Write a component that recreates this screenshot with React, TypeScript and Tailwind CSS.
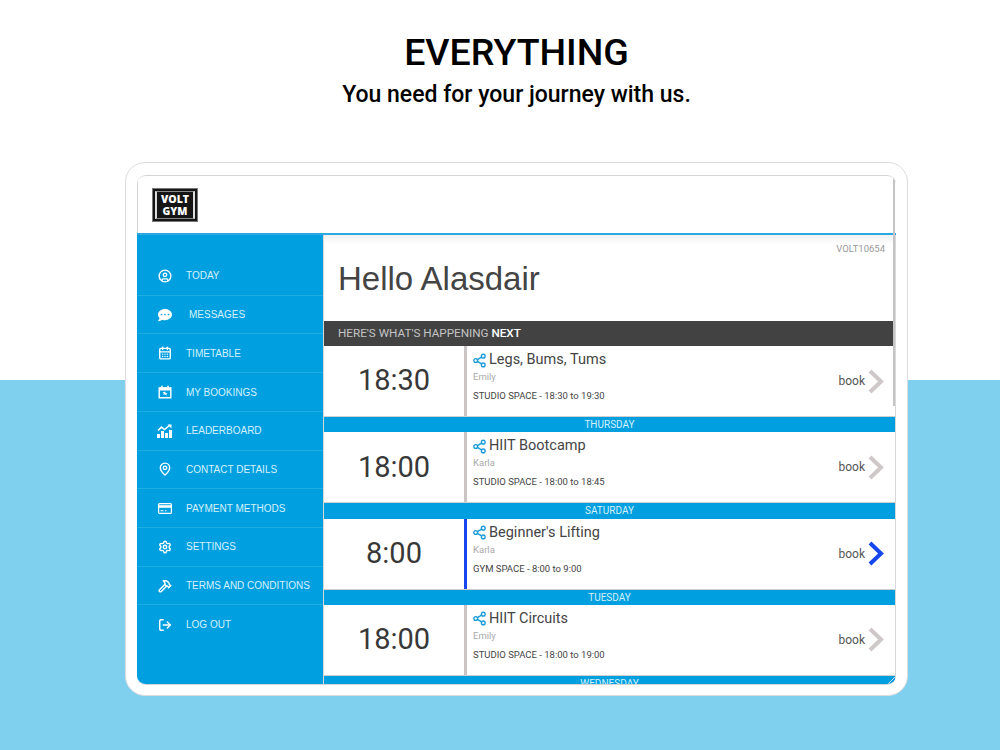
import { CircleUser, CalendarDays, MapPin, Settings, Hammer, LogOut, Share2 } from 'lucide-react'
import { FaCommentDots } from 'react-icons/fa'

const roboto = "font-['Roboto',sans-serif]"

function BookingsIcon() {
  return (
    <svg viewBox="0 0 14 14" className="h-[14px] w-[14px]" fill="none">
      <path d="M1.2 3h11.6v9.8H1.2z" stroke="currentColor" strokeWidth="1.4" />
      <path d="M1 2.5h12V5.5H1z" fill="currentColor" />
      <path d="M4 .8v2M10 .8v2" stroke="currentColor" strokeWidth="1.6" />
      <path d="M7 6.4l.8 1.6 1.7.2-1.2 1.2.3 1.7L7 9.3l-1.6.8.3-1.7-1.2-1.2 1.7-.2z" fill="currentColor" />
    </svg>
  )
}

function LeaderboardIcon() {
  return (
    <svg viewBox="0 0 16 14" className="h-[14px] w-[16px]" fill="currentColor">
      <path d="M1 6.5l3.5-3.4 3 2.4L13 1" fill="none" stroke="currentColor" strokeWidth="1.5" />
      <path d="M10.5.5h4v4z" />
      <rect x="0" y="10" width="3" height="4" />
      <rect x="4" y="7" width="3" height="7" />
      <rect x="8" y="9" width="3" height="5" />
      <rect x="12" y="6" width="3" height="8" />
    </svg>
  )
}

function PaymentIcon() {
  return (
    <svg viewBox="0 0 14 11" className="h-[11px] w-[14px]" fill="none">
      <rect x=".6" y=".6" width="12.8" height="9.8" rx="1" stroke="currentColor" strokeWidth="1.2" />
      <path d="M1 2.2h12v2.6H1z" fill="currentColor" />
      <path d="M2.5 7.8h3M7 7.8h1.5" stroke="currentColor" strokeWidth="1.1" />
    </svg>
  )
}

const navItems = [
  { label: 'TODAY', icon: <CircleUser size={14} strokeWidth={2.4} /> },
  { label: 'MESSAGES', icon: <FaCommentDots size={14} />, shift: true },
  { label: 'TIMETABLE', icon: <CalendarDays size={14} strokeWidth={2.4} /> },
  { label: 'MY BOOKINGS', icon: <BookingsIcon /> },
  { label: 'LEADERBOARD', icon: <LeaderboardIcon /> },
  { label: 'CONTACT DETAILS', icon: <MapPin size={14} strokeWidth={2.4} /> },
  { label: 'PAYMENT METHODS', icon: <PaymentIcon /> },
  { label: 'SETTINGS', icon: <Settings size={14} strokeWidth={2.4} /> },
  { label: 'TERMS AND CONDITIONS', icon: <Hammer size={14} strokeWidth={2.4} /> },
  { label: 'LOG OUT', icon: <LogOut size={14} strokeWidth={2.4} /> },
]

const classes = [
  { time: '18:30', title: 'Legs, Bums, Tums', coach: 'Emily', place: 'STUDIO SPACE - 18:30 to 19:30', day: 'THURSDAY' },
  { time: '18:00', title: 'HIIT Bootcamp', coach: 'Karla', place: 'STUDIO SPACE - 18:00 to 18:45', day: 'SATURDAY' },
  { time: '8:00', title: "Beginner's Lifting", coach: 'Karla', place: 'GYM SPACE - 8:00 to 9:00', day: 'TUESDAY', active: true },
  { time: '18:00', title: 'HIIT Circuits', coach: 'Emily', place: 'STUDIO SPACE - 18:00 to 19:00', day: 'WEDNESDAY' },
]

function Chevron({ active }: { active?: boolean }) {
  return (
    <svg viewBox="0 0 16 25" className={`h-[25px] w-[16px] ${active ? 'text-[#1546ee]' : 'text-[#cfc8c8]'}`} fill="none">
      <path d="M2 2l11 10.5L2 23" stroke="currentColor" strokeWidth="4" />
    </svg>
  )
}

function Logo() {
  return (
    <div className="flex h-[34px] w-[46px] items-center justify-center border border-[#777] bg-[#151515]">
      <div className="flex h-[28px] w-[40px] flex-col items-center justify-center border-x-2 border-y border-x-[#ddd] border-y-[#888] font-['Open_Sans',sans-serif] text-[10.5px] font-extrabold leading-[12px] text-white">
        <span>VOLT</span>
        <span>GYM</span>
      </div>
    </div>
  )
}

export default function App() {
  return (
    <div className={`h-[750px] w-[1000px] overflow-hidden bg-[linear-gradient(to_bottom,#ffffff_380px,#7fcfef_380px)] ${roboto}`}>
      <div className="ml-[125px] w-[783px]">
        <div className="flex h-[162px] flex-col items-center pt-[30px]">
          <h1 className="text-[37.5px] font-medium leading-[44px] text-black">EVERYTHING</h1>
          <p className="mt-[7px] text-[23px] font-medium leading-[28px] text-black">You need for your journey with us.</p>
        </div>

        <div className="h-[534px] rounded-[20px] border border-[#dcdcdc] bg-white pt-[12px] pl-[11px] pr-[11px]">
          <div className="relative h-[510px] w-[759px] overflow-hidden rounded-[9px] border-y border-[#d4d4d4]">
            <div className="flex h-[57px] items-center border-l border-[#d4d4d4] pl-[14px]">
              <Logo />
            </div>
            <div className="h-[2px] bg-[#2aa9e2]" />

            <div className="flex h-[450px]">
              <nav className="w-[186px] shrink-0 bg-[#009fe0] pt-[22px] font-['Liberation_Sans',sans-serif] text-[10px] text-[#d5f1fc]">
                {navItems.map((item, i) => (
                  <div
                    key={item.label}
                    className={`flex h-[38.72px] items-center ${i < navItems.length - 1 ? 'border-b border-[#22ace4]' : ''}`}
                  >
                    <span className="flex w-[49px] shrink-0 justify-center pl-[7px] text-white">{item.icon}</span>
                    <span className={item.shift ? 'pl-[3px]' : ''}>{item.label}</span>
                  </div>
                ))}
              </nav>

              <main className="w-[573px] border-x border-[#d8d8d8]">
                <div className="relative h-[86px] bg-[linear-gradient(to_bottom,#f0f0f0,#ffffff_10px)]">
                  <span className="absolute right-[10px] top-[7px] text-[9.5px] text-[#999]">VOLT10654</span>
                  <h2 className="pl-[14px] pt-[25px] font-['Liberation_Sans',sans-serif] text-[33px] font-normal leading-[38px] text-[#444]">Hello Alasdair</h2>
                </div>
                <div className="flex h-[25px] items-center bg-[#424242] pl-[14px] text-[11.7px] text-[#c4c4c4]">
                  HERE'S WHAT'S HAPPENING&nbsp;<span className="font-medium text-white">NEXT</span>
                </div>
                {classes.map((c) => (
                  <div key={c.title}>
                    <div className="flex h-[71px] border-b border-[#cfcfcf] bg-white">
                      <div className="flex w-[140px] shrink-0 items-center justify-center text-[29px] text-[#383838]">{c.time}</div>
                      <div className={`w-[3px] shrink-0 ${c.active ? 'bg-[#1546ee]' : 'bg-[#cbc5c5]'}`} />
                      <div className="flex-1 pl-[6px] pt-[5px]">
                        <div className="flex items-center gap-[2px] text-[14.5px] leading-[18px] text-[#444]">
                          <Share2 size={15} strokeWidth={2.2} className="-ml-px text-[#1a9ad9]" />
                          <span>{c.title}</span>
                        </div>
                        <div className="mt-[1px] text-[9.5px] leading-[13px] text-[#aaa]">{c.coach}</div>
                        <div className="mt-[6px] text-[9.5px] leading-[13px] text-[#444]">{c.place}</div>
                      </div>
                      <div className="flex items-center gap-[3px] pr-[11px] text-[12px] text-[#555]">
                        <span>book</span>
                        <Chevron active={c.active} />
                      </div>
                    </div>
                    <div className="flex h-[15.33px] items-center justify-center overflow-hidden bg-[#009fe0] text-[10px] text-[#d5f1fc]">{c.day}</div>
                  </div>
                ))}
              </main>
            </div>

            {/* scroll bar down the right edge */}
            <div className="absolute right-[1px] top-0 h-[230px] w-[2px] bg-[#c4c4c4]" />
            {/* resize handle */}
            <svg viewBox="0 0 9 9" className="absolute bottom-0 right-0 h-[9px] w-[9px] text-[#b9d2dc]" fill="none">
              <path d="M1 9l8-8M5 9l4-4" stroke="currentColor" />
            </svg>
          </div>
        </div>
      </div>
    </div>
  )
}
